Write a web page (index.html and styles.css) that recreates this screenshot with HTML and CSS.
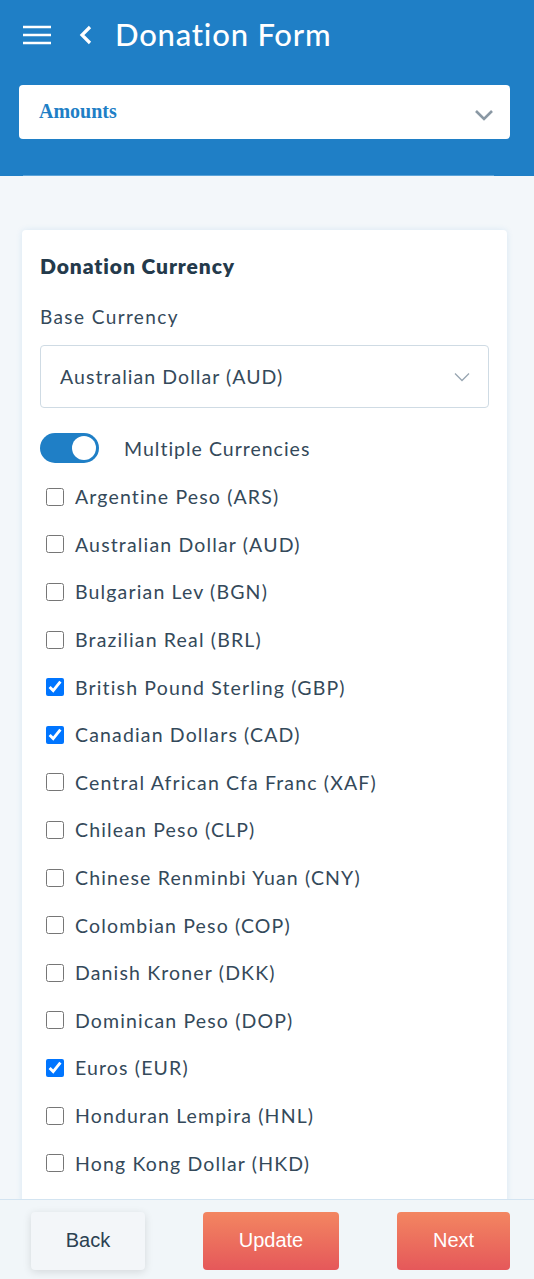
FILE: index.html
```html
<!DOCTYPE html>
<html lang="en">
<head>
    <meta charset="UTF-8">
    <meta name="viewport" content="width=device-width, initial-scale=1.0">
    <title>Donation Form</title>
    <link rel="stylesheet" href="styles.css">
</head>
<body>
    <header class="topbar">
        <div class="title-row">
            <span class="menu-icon">
                <svg width="28" height="20" viewBox="0 0 28 20"><path d="M0 2h28M0 10h28M0 18h28" stroke="#fff" stroke-width="2.6"/></svg>
            </span>
            <span class="back-icon">
                <svg width="14" height="20" viewBox="0 0 14 20"><path d="M11 2L3 10l8 8" stroke="#fff" stroke-width="3.2" fill="none"/></svg>
            </span>
            <h1>Donation Form</h1>
        </div>
        <div class="section-select">
            <span>Amounts</span>
            <svg width="20" height="12" viewBox="0 0 20 12"><path d="M2 2l8 8 8-8" stroke="#8a98a4" stroke-width="2.6" fill="none"/></svg>
        </div>
        <div class="topbar-line"></div>
    </header>

    <main class="content">
        <section class="card">
            <h2>Donation Currency</h2>
            <label class="field-label">Base Currency</label>
            <div class="select-box">
                <span>Australian Dollar (AUD)</span>
                <svg width="16" height="10" viewBox="0 0 16 10"><path d="M1 1.5l7 7 7-7" stroke="#98a6b2" stroke-width="1.3" fill="none"/></svg>
            </div>
            <div class="toggle-row">
                <span class="toggle"><span class="knob"></span></span>
                <span>Multiple Currencies</span>
            </div>
            <ul class="currency-list" id="currencyList"></ul>
        </section>
    </main>

    <footer class="actions">
        <button type="button" class="btn btn-back">Back</button>
        <button type="button" class="btn btn-primary btn-update">Update</button>
        <button type="button" class="btn btn-primary btn-next">Next</button>
    </footer>

    <script>
        // currency options, checked ones are already selected
        const currencies = [
            ['Argentine Peso (ARS)', false],
            ['Australian Dollar (AUD)', false],
            ['Bulgarian Lev (BGN)', false],
            ['Brazilian Real (BRL)', false],
            ['British Pound Sterling (GBP)', true],
            ['Canadian Dollars (CAD)', true],
            ['Central African Cfa Franc (XAF)', false],
            ['Chilean Peso (CLP)', false],
            ['Chinese Renminbi Yuan (CNY)', false],
            ['Colombian Peso (COP)', false],
            ['Danish Kroner (DKK)', false],
            ['Dominican Peso (DOP)', false],
            ['Euros (EUR)', true],
            ['Honduran Lempira (HNL)', false],
            ['Hong Kong Dollar (HKD)', false]
        ];

        const list = document.getElementById('currencyList');
        currencies.forEach(function(item) {
            const li = document.createElement('li');
            li.innerHTML = `<label><input type="checkbox" ${item[1] ? 'checked' : ''}><span>${item[0]}</span></label>`;
            list.appendChild(li);
        });
    </script>
</body>
</html>
```

FILE: styles.css
```css
body {
    margin: 0;
    font-family: Lato, "Open Sans", sans-serif;
    background-color: #f3f7fa;
    color: #2b4152;
    overflow: hidden;
    height: 1279px;
}
.topbar {
    background-color: #1f7fc6;
    padding: 0 24px 0 19px;
    height: 176px;
    box-sizing: border-box;
    display: flex;
    flex-direction: column;
}
.title-row {
    display: flex;
    align-items: center;
    height: 70px;
    padding-left: 4px;
}
.menu-icon {
    display: flex;
    margin-right: 28px;
}
.back-icon {
    display: flex;
    margin-right: 22px;
}
.title-row h1 {
    margin: 0 0 2px 0;
    color: #fff;
    font-size: 31px;
    font-weight: 500;
    letter-spacing: 0.8px;
}
.section-select {
    margin-top: 15px;
    height: 54px;
    background: #fff;
    border-radius: 4px;
    display: flex;
    align-items: center;
    justify-content: space-between;
    padding: 0 16px 0 20px;
}
.section-select span {
    font-family: "Liberation Serif", serif;
    font-weight: bold;
    font-size: 20px;
    color: #1f7fc6;
    margin-top: -1px;
}
.section-select svg {
    margin-top: 5px;
}
.topbar-line {
    margin: auto 16px 0 4px;
    height: 1px;
    background-color: #5ba3d8;
}
.content {
    padding: 54px 27px 0 22px;
}
.card {
    background: #fff;
    border-radius: 4px;
    box-shadow: 0 0 6px rgba(31, 127, 198, 0.12);
    padding: 23px 18px 20px 18px;
}
.card h2 {
    margin: 0;
    font-size: 21px;
    font-weight: 800;
    color: #243a4b;
    letter-spacing: 0.9px;
}
.field-label {
    display: block;
    margin-top: 27px;
    font-size: 19px;
    color: #34495a;
    letter-spacing: 1.4px;
}
.select-box {
    margin-top: 17px;
    height: 61px;
    border: 1px solid #cfdbe4;
    border-radius: 4px;
    display: flex;
    align-items: center;
    justify-content: space-between;
    padding: 0 18px 0 19px;
    font-size: 19.5px;
    color: #34495a;
    letter-spacing: 1.05px;
}
.toggle-row {
    display: flex;
    align-items: center;
    margin-top: 25px;
    font-size: 19.5px;
    color: #34495a;
    letter-spacing: 1px;
}
.toggle {
    width: 59px;
    height: 30px;
    border-radius: 15px;
    background: #1f7fc6;
    display: flex;
    align-items: center;
    justify-content: flex-end;
    padding: 0 3px;
    box-sizing: border-box;
    margin-right: 25px;
}
.knob {
    width: 24px;
    height: 24px;
    border-radius: 50%;
    background: #fff;
}
.currency-list {
    list-style: none;
    margin: 10px 0 0 0;
    padding: 0;
}
.currency-list li {
    height: 47.6px;
    display: flex;
    align-items: center;
}
.currency-list label {
    display: flex;
    align-items: center;
    font-size: 19.5px;
    color: #34495a;
    letter-spacing: 1.15px;
}
.currency-list input {
    width: 18px;
    height: 18px;
    margin: 0 11px 0 6px;
}
.actions {
    position: fixed;
    left: 0;
    right: 0;
    bottom: 0;
    height: 80px;
    background: #f1f6f9;
    border-top: 1px solid #d3e4f1;
    display: flex;
    align-items: center;
    justify-content: space-between;
    padding: 0 24px 0 31px;
    box-sizing: border-box;
}
.btn {
    height: 58px;
    border: none;
    border-radius: 4px;
    font-family: "Liberation Sans", Arial, sans-serif;
    font-size: 20px;
    cursor: pointer;
    margin-top: 2px;
}
.btn-back {
    width: 114px;
    background: #f3f6f9;
    color: #2b4152;
    box-shadow: 0 2px 8px rgba(0, 0, 0, 0.12);
}
.btn-primary {
    background: linear-gradient(#f38661, #e5585a);
    color: #fff;
}
.btn-update {
    width: 136px;
}
.btn-next {
    width: 113px;
}
```
